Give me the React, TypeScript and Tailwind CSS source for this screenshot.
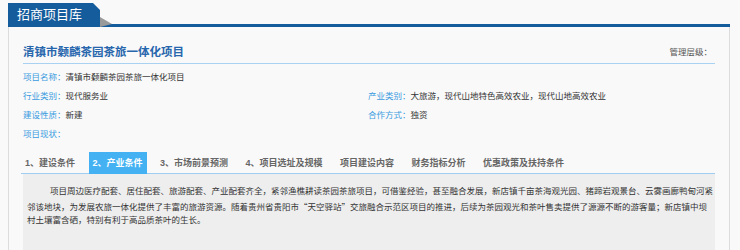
import React from "react";

const font = { fontFamily: '"Liberation Sans", "Noto Sans CJK SC", sans-serif' };
const cjk = { fontFamily: '"Noto Sans CJK SC", sans-serif' };

const tabs = [
  "1、建设条件",
  "2、产业条件",
  "3、市场前景预测",
  "4、项目选址及规模",
  "项目建设内容",
  "财务指标分析",
  "优惠政策及扶持条件",
];

const Field: React.FC<{ label: string; value?: string }> = ({ label, value }) => (
  <div className="h-[19px] leading-[19px] text-[8.5px] whitespace-nowrap">
    <span className="text-[#3a9be0]">{label}：</span>
    <span className="text-[#333]">{value}</span>
  </div>
);

export default function App() {
  return (
    <div className="w-[740px] h-[250px] overflow-hidden bg-[#f9f9f9] pt-[3px] pl-[8px]" style={font}>
      {/* header */}
      <div className="flex w-[722px] h-[24px]">
        <div className="w-[92px] h-[24px] bg-[#155c9c] text-white text-[13px] leading-[24px] pl-[9px] [clip-path:polygon(0_0,calc(100%-7px)_0,100%_7px,100%_100%,0_100%)]">
          招商项目库
        </div>
        <div className="relative flex-1 border-b-[3px] border-[#155c9c]">
          <svg className="absolute left-0 top-[14px]" width="12" height="10" viewBox="0 0 12 10">
            <polygon points="0,0 12,7 0,10" fill="#9a9a9a" />
          </svg>
        </div>
      </div>

      {/* panel */}
      <div className="w-[722px] h-[230px] border-x border-[#dcdcdc] bg-[#f9f9f9] pl-[14px] pr-[14px]">
        <div className="flex items-end justify-between pt-[15px] h-[37px] border-b border-[#a9d1f2]">
          <div className="text-[11.5px] leading-[20px] font-bold text-[#2766ad] pb-[1px]">
            清镇市颡麟茶园茶旅一体化项目
          </div>
          <div className="text-[8.5px] leading-[20px] text-[#555] pb-[1px] pr-[3px]">管理层级：</div>
        </div>

        <div className="mt-[4px] grid grid-cols-[345px_1fr]">
          <Field label="项目名称" value="清镇市颡麟茶园茶旅一体化项目" />
          <div />
          <Field label="行业类别" value="现代服务业" />
          <Field label="产业类别" value="大旅游，现代山地特色高效农业，现代山地高效农业" />
          <Field label="建设性质" value="新建" />
          <Field label="合作方式" value="独资" />
          <Field label="项目现状" />
        </div>

        <div className="mt-[8px] flex h-[22px] -ml-[2px] border-b border-[#9fcdf2] w-[694px]">
          {tabs.map((t, i) => (
            <div
              key={t}
              className={
                i === 1
                  ? "px-[4px] mr-[9.5px] h-[22px] leading-[22px] text-[9px] font-bold whitespace-nowrap bg-[#44b2f2] text-white"
                  : "px-[4px] mr-[9.5px] h-[22px] leading-[22px] text-[9px] font-bold whitespace-nowrap text-[#666]"
              }
            >
              {t}
            </div>
          ))}
        </div>

        <div className="w-[692px] h-[80px] bg-[#eeeeee] pl-[4px] pt-[10px] text-[8.5px] leading-[14.5px] text-[#333]">
          <div className="w-[675px] indent-[23px] whitespace-nowrap text-justify [text-align-last:justify]">
            项目周边医疗配套、居住配套、旅游配套、产业配套齐全，紧邻渔樵耕读茶园茶旅项目，可借鉴经验，甚至融合发展，新店镇千亩茶海观光园、猪蹄岩观景台、云雾画廊鸭甸河紧
          </div>
          <div className="w-[675px] whitespace-nowrap text-justify [text-align-last:justify]" style={cjk}>
            邻该地块，为发展农旅一体化提供了丰富的旅游资源。随着贵州省贵阳市“天空驿站”交旅融合示范区项目的推进，后续为茶园观光和茶叶售卖提供了源源不断的游客量；新店镇中坝
          </div>
          <div className="whitespace-nowrap">村土壤富含硒，特别有利于高品质茶叶的生长。</div>
        </div>
      </div>
    </div>
  );
}
